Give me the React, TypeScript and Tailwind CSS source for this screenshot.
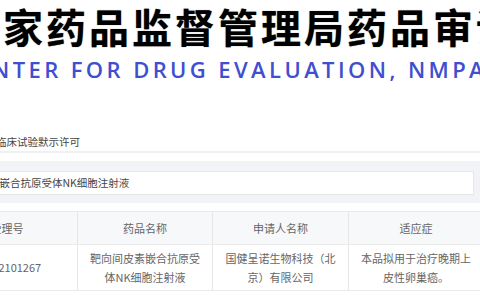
import React from 'react';

const cjk = '"Noto Sans CJK SC", "Open Sans", sans-serif';

const columns = ['受理号', '药品名称', '申请人名称', '适应症'];

const row = [
  'CXSL2101267',
  '靶向间皮素嵌合抗原受体NK细胞注射液',
  '国健呈诺生物科技（北京）有限公司',
  '本品拟用于治疗晚期上皮性卵巢癌。',
];

const App: React.FC = () => {
  return (
    <div className="w-[480px] h-[300px] overflow-hidden bg-white" style={{ fontFamily: cjk }}>
      {/* banner */}
      <div className="h-[52px] flex items-center">
        <h1 className="ml-[-40px] whitespace-nowrap text-[40px] leading-none font-bold tracking-[3px] text-black [text-shadow:0_0_1px_rgba(0,0,0,0.6)]">
          国家药品监督管理局药品审评中心
        </h1>
      </div>
      <div className="h-[34px] flex items-center">
        <p className="ml-[-41px] whitespace-nowrap text-[22px] leading-none font-semibold tracking-[3.4px] text-[#3f4fd0] [font-family:'Open_Sans',sans-serif]">
          CENTER FOR DRUG EVALUATION, NMPA
        </p>
      </div>

      {/* breadcrumb */}
      <div className="mt-[46px] h-[21px] flex items-center border-b-2 border-[#f0f0f2]">
        <span className="ml-[-4px] text-[10.5px] text-[#444] whitespace-nowrap">临床试验默示许可</span>
      </div>

      {/* search panel */}
      <div className="mt-[8px] bg-[#f2f3f7] pt-[10px] pb-[8px] pr-[6px]">
        <div className="h-[24px] bg-white border border-[#e6e7eb] flex items-center ml-[-2px]">
          <span className="ml-[-52px] text-[10.5px] text-[#444] whitespace-nowrap">靶向间皮素嵌合抗原受体NK细胞注射液</span>
        </div>
      </div>

      {/* table */}
      <div className="mt-[8px] ml-[-63px] w-[546px] text-[11px] text-[#666]">
        <div className="grid grid-cols-[140px_135px_136px_135px] bg-[#f7f8fa] border-t border-b border-[#ebebeb]">
          {columns.map((c, i) => (
            <div
              key={c}
              className={`h-[32px] flex items-center justify-center ${i > 0 ? 'border-l border-[#e6e6e6]' : ''}`}
            >
              {c}
            </div>
          ))}
        </div>
        <div className="grid grid-cols-[140px_135px_136px_135px] border-b border-[#ebebeb]">
          {row.map((c, i) => (
            <div
              key={i}
              className={`h-[45px] flex items-center justify-center text-center px-[12px] leading-[19px] ${i > 0 ? 'border-l border-[#e6e6e6]' : ''}`}
            >
              {c}
            </div>
          ))}
        </div>
      </div>
    </div>
  );
};

export default App;
